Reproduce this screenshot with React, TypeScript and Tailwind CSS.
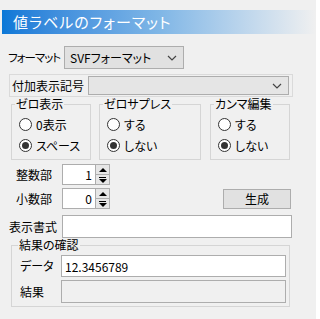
import { useState } from "react";

const font = { fontFamily: '"Noto Sans CJK JP", "Noto Sans", sans-serif' };

function Chevron() {
    return (
        <svg width="10" height="6" viewBox="0 0 10 6" className="shrink-0">
            <path d="M1 1 L5 5 L9 1" fill="none" stroke="#444" strokeWidth="1.2" />
        </svg>
    );
}

function Radio({ label, checked, onClick }: { label: string; checked: boolean; onClick: () => void }) {
    return (
        <button onClick={onClick} className="flex items-center gap-[4px] h-[21px] text-[12px] text-black whitespace-nowrap">
            <span className="flex items-center justify-center shrink-0 w-[13px] h-[13px] rounded-full border border-[#333] bg-white">
                {checked && <span className="w-[7px] h-[7px] rounded-full bg-[#333]" />}
            </span>
            <span className="leading-none">{label}</span>
        </button>
    );
}

function Group({ title, width, options }: { title: string; width: string; options: string[] }) {
    const [value, setValue] = useState(1);
    return (
        <fieldset className={`${width} border border-[#d5d5d5] pl-[3px] pb-[3px]`}>
            <legend className="px-[1px] text-[12px] leading-[14px] text-black whitespace-nowrap">{title}</legend>
            <div className="flex flex-col pl-[4px] mt-[3px]">
                {options.map((o, i) => (
                    <Radio key={o} label={o} checked={value === i} onClick={() => setValue(i)} />
                ))}
            </div>
        </fieldset>
    );
}

function Spinner({ value }: { value: number }) {
    return (
        <div className="flex w-[48px] h-[21px] border border-[#adadad] bg-white">
            <div className="flex-1 flex items-center justify-end pr-[3px] text-[12px] text-black">{value}</div>
            <div className="flex flex-col w-[14px] border-l border-[#adadad]">
                <div className="flex-1 flex items-center justify-center bg-[#e6e6e6] border-b border-[#adadad]">
                    <span className="w-0 h-0 border-l-[4px] border-r-[4px] border-b-[4px] border-l-transparent border-r-transparent border-b-black" />
                </div>
                <div className="flex-1 flex flex-col items-center justify-center gap-[1px] bg-[#e6e6e6]">
                    <span className="w-[7px] h-px bg-black" />
                    <span className="w-0 h-0 border-l-[4px] border-r-[4px] border-t-[4px] border-l-transparent border-r-transparent border-t-black" />
                </div>
            </div>
        </div>
    );
}

export default function App() {
    return (
        <div className="w-[316px] h-[319px] bg-[#f0f0f0] pt-[10px] overflow-hidden [font-feature-settings:'palt']" style={font}>
            <div className="ml-[2px] h-[24px] flex items-center pl-[11px] bg-gradient-to-r from-[#0a78d7] via-[#7fb6e6] to-[#f0f0f0]">
                <span className="text-[15px] text-white tracking-[1px] whitespace-nowrap">値ラベルのフォーマット</span>
            </div>

            <div className="flex items-center mt-[12px] pl-[8px] h-[23px]">
                <span className="w-[56px] shrink-0 whitespace-nowrap text-[11.5px] tracking-[-1px] text-black">フォーマット</span>
                <button className="flex items-center justify-between w-[120px] h-[23px] pl-[5px] pr-[6px] bg-[#e1e1e1] border border-[#adadad] text-[12px] text-black whitespace-nowrap">
                    <span>SVFフォーマット</span>
                    <Chevron />
                </button>
            </div>

            <div className="flex items-center mt-[5px] ml-[9px] w-[284px] h-[23px] border border-[#dadada] pl-[2px] pr-[3px]">
                <span className="w-[76px] shrink-0 whitespace-nowrap text-[12px] text-black">付加表示記号</span>
                <button className="flex items-center justify-end flex-1 h-[19px] pr-[6px] bg-[#e5e5e5] border border-[#adadad]">
                    <Chevron />
                </button>
            </div>

            <div className="flex ml-[11px]">
                <Group title="ゼロ表示" width="w-[80px]" options={["0表示", "スペース"]} />
                <div className="ml-[8px]">
                    <Group title="ゼロサプレス" width="w-[102px]" options={["する", "しない"]} />
                </div>
                <div className="ml-[9px]">
                    <Group title="カンマ編集" width="w-[80px]" options={["する", "しない"]} />
                </div>
            </div>

            <div className="flex items-center mt-[4px] pl-[16px]">
                <span className="w-[46px] shrink-0 whitespace-nowrap text-[12px] text-black">整数部</span>
                <Spinner value={1} />
            </div>
            <div className="flex items-center mt-[3px] pl-[16px]">
                <span className="w-[46px] shrink-0 whitespace-nowrap text-[12px] text-black">小数部</span>
                <Spinner value={0} />
                <button className="ml-[113px] w-[68px] h-[20px] bg-[#e1e1e1] border border-[#adadad] text-[12px] text-black">生成</button>
            </div>

            <div className="flex items-center mt-[6px] pl-[9px]">
                <span className="w-[53px] shrink-0 whitespace-nowrap text-[12px] text-black">表示書式</span>
                <input className="w-[230px] h-[23px] bg-white border border-[#adadad] outline-none" />
            </div>

            <fieldset className="ml-[11px] w-[279px] border border-[#d5d5d5] pl-[6px] pb-[3px]">
                <legend className="px-[1px] text-[12px] leading-[14px] text-black">結果の確認</legend>
                <div className="flex items-center mt-[3px] pl-[2px]">
                    <span className="w-[41px] shrink-0 whitespace-nowrap text-[12px] text-black">データ</span>
                    <input
                        defaultValue="12.3456789"
                        className="w-[225px] h-[22px] px-[3px] bg-white border border-[#adadad] text-[12px] text-black outline-none"
                    />
                </div>
                <div className="flex items-center mt-[3px] pl-[2px]">
                    <span className="w-[41px] shrink-0 whitespace-nowrap text-[12px] text-black">結果</span>
                    <div className="w-[225px] h-[23px] bg-[#f0f0f0] border border-[#adadad]" />
                </div>
            </fieldset>
        </div>
    );
}
